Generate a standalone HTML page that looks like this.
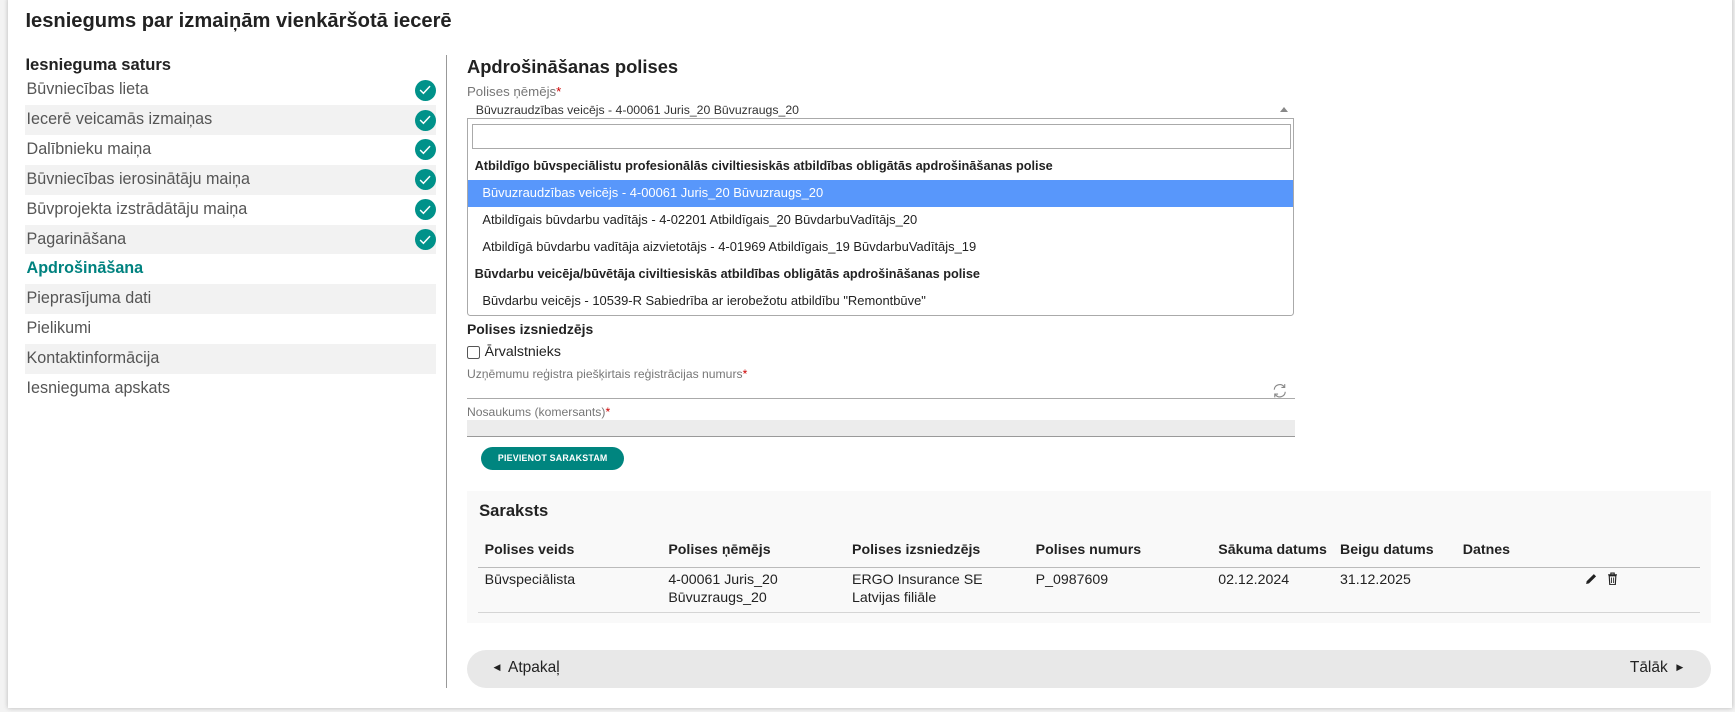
<!DOCTYPE html>
<html><head><meta charset="utf-8"><style>
html,body{margin:0;padding:0;background:#f3f3f3;width:1735px;height:712px;overflow:hidden}
#w{zoom:1.1065;width:1568px;height:644px;position:relative;font-family:"Liberation Sans",Arial,sans-serif;color:#222}
.card{position:absolute;left:7px;top:-2px;width:1558px;height:642px;background:#fff;box-shadow:0 0 4px rgba(0,0,0,.25)}
.a{position:absolute;white-space:nowrap}
h1{position:absolute;left:23px;top:9px;margin:0;font-size:18.2px;font-weight:bold}
.side{position:absolute;left:23px;top:68px;width:371px}
.side div{height:27px;line-height:27px;font-size:14.6px;color:#555;position:relative;padding-left:1px}
.side div.g{background:#f2f2f2}
.side div.act{color:#00827f;font-weight:bold}
.ck{position:absolute;right:0;top:4px;width:19px;height:19px;border-radius:50%;background:#00928a}
.ck svg{position:absolute;left:4px;top:5px}
.lbl{font-size:12px;color:#777}
.lbl b{color:#c00;font-weight:normal}
.opt{position:absolute;left:0;width:746px;height:24px;line-height:24px;font-size:11.7px;padding-left:13px;box-sizing:border-box}
.grp{position:absolute;left:0;width:746px;height:24px;line-height:24px;font-size:11.5px;font-weight:bold;padding-left:6px;box-sizing:border-box}
.col{position:absolute;font-size:12.8px}
</style></head><body><div id="w">
<div class="card"></div>
<h1>Iesniegums par izmaiņām vienkāršotā iecerē</h1>
<div class="a" style="left:23px;top:50px;font-size:15px;font-weight:bold">Iesnieguma saturs</div>
<div class="side">
<div>Būvniecības lieta<span class="ck"><svg width="11" height="9" viewBox="0 0 11 9"><path d="M1 4.5l3 3L10 1" stroke="#fff" stroke-width="1.3" fill="none"/></svg></span></div>
<div class="g">Iecerē veicamās izmaiņas<span class="ck"><svg width="11" height="9" viewBox="0 0 11 9"><path d="M1 4.5l3 3L10 1" stroke="#fff" stroke-width="1.3" fill="none"/></svg></span></div>
<div>Dalībnieku maiņa<span class="ck"><svg width="11" height="9" viewBox="0 0 11 9"><path d="M1 4.5l3 3L10 1" stroke="#fff" stroke-width="1.3" fill="none"/></svg></span></div>
<div class="g">Būvniecības ierosinātāju maiņa<span class="ck"><svg width="11" height="9" viewBox="0 0 11 9"><path d="M1 4.5l3 3L10 1" stroke="#fff" stroke-width="1.3" fill="none"/></svg></span></div>
<div>Būvprojekta izstrādātāju maiņa<span class="ck"><svg width="11" height="9" viewBox="0 0 11 9"><path d="M1 4.5l3 3L10 1" stroke="#fff" stroke-width="1.3" fill="none"/></svg></span></div>
<div class="g">Pagarināšana<span class="ck"><svg width="11" height="9" viewBox="0 0 11 9"><path d="M1 4.5l3 3L10 1" stroke="#fff" stroke-width="1.3" fill="none"/></svg></span></div>
<div class="act">Apdrošināšana</div>
<div class="g">Pieprasījuma dati</div>
<div>Pielikumi</div>
<div class="g">Kontaktinformācija</div>
<div>Iesnieguma apskats</div>
</div>
<div class="a" style="left:403px;top:50px;width:1px;height:572px;background:#999"></div>

<div class="a" style="left:422px;top:51px;font-size:16.6px;font-weight:bold">Apdrošināšanas polises</div>
<div class="a lbl" style="left:422px;top:76px">Polises ņēmējs<b>*</b></div>
<div class="a" style="left:430px;top:93px;font-size:11.1px;color:#333">Būvuzraudzības veicējs - 4-00061 Juris_20 Būvuzraugs_20</div>
<div class="a" style="left:1157px;top:97px;width:0;height:0;border-left:4px solid transparent;border-right:4px solid transparent;border-bottom:5px solid #888"></div>
<div class="a" style="left:422px;top:107px;width:746px;height:177px;border:1px solid #aaa;border-radius:0 0 3px 3px;background:#fff">
 <div class="a" style="left:4px;top:4px;width:738px;height:21px;border:1px solid #aaa"></div>
 <div class="grp" style="top:30px">Atbildīgo būvspeciālistu profesionālās civiltiesiskās atbildības obligātās apdrošināšanas polise</div>
 <div class="opt" style="top:55px;background:#5897fb;color:#fff">Būvuzraudzības veicējs - 4-00061 Juris_20 Būvuzraugs_20</div>
 <div class="opt" style="top:79px">Atbildīgais būvdarbu vadītājs - 4-02201 Atbildīgais_20 BūvdarbuVadītājs_20</div>
 <div class="opt" style="top:104px">Atbildīgā būvdarbu vadītāja aizvietotājs - 4-01969 Atbildīgais_19 BūvdarbuVadītājs_19</div>
 <div class="grp" style="top:128px">Būvdarbu veicēja/būvētāja civiltiesiskās atbildības obligātās apdrošināšanas polise</div>
 <div class="opt" style="top:152px">Būvdarbu veicējs - 10539-R Sabiedrība ar ierobežotu atbildību "Remontbūve"</div>
</div>
<div class="a" style="left:422px;top:290px;font-size:12.6px;font-weight:bold">Polises izsniedzējs</div>
<div class="a" style="left:422px;top:313px;width:10px;height:10px;border:1px solid #555;border-radius:2px"></div>
<div class="a" style="left:438px;top:311px;font-size:12.8px">Ārvalstnieks</div>
<div class="a lbl" style="left:422px;top:332px;font-size:11px">Uzņēmumu reģistra piešķirtais reģistrācijas numurs<b>*</b></div>
<div class="a" style="left:422px;top:360px;width:748px;height:1px;background:#aaa"></div>
<svg class="a" style="left:1150px;top:346px" width="14" height="14" viewBox="0 0 14 14"><path d="M2 6A5 5 0 0 1 11 3.5M12 8A5 5 0 0 1 3 10.5" stroke="#888" fill="none" stroke-width="1"/><path d="M11.5 1v3h-3M2.5 13v-3h3" stroke="#888" fill="none" stroke-width="1"/></svg>
<div class="a lbl" style="left:422px;top:366px;font-size:11px">Nosaukums (komersants)<b>*</b></div>
<div class="a" style="left:422px;top:380px;width:748px;height:14px;background:#ececec;border-bottom:1px solid #999"></div>
<div class="a" style="left:435px;top:404px;width:129px;height:21px;border-radius:11px;background:#00857f;color:#fff;font-size:8px;font-weight:bold;text-align:center;line-height:21px;letter-spacing:.2px">PIEVIENOT SARAKSTAM</div>

<div class="a" style="left:422px;top:444px;width:1124px;height:119px;background:#f9f9f9"></div>
<div class="a" style="left:433px;top:453px;font-size:15px;font-weight:bold">Saraksts</div>
<div class="col a" style="left:438px;top:490px;font-weight:bold">Polises veids</div>
<div class="col a" style="left:604px;top:490px;font-weight:bold">Polises ņēmējs</div>
<div class="col a" style="left:770px;top:490px;font-weight:bold">Polises izsniedzējs</div>
<div class="col a" style="left:936px;top:490px;font-weight:bold">Polises numurs</div>
<div class="col a" style="left:1101px;top:490px;font-weight:bold">Sākuma datums</div>
<div class="col a" style="left:1211px;top:490px;font-weight:bold">Beigu datums</div>
<div class="col a" style="left:1322px;top:490px;font-weight:bold">Datnes</div>
<div class="a" style="left:432px;top:512px;width:1104px;height:1px;background:#bbb"></div>
<div class="col a" style="left:438px;top:517px">Būvspeciālista</div>
<div class="col a" style="left:604px;top:517px;line-height:16px">4-00061 Juris_20<br>Būvuzraugs_20</div>
<div class="col a" style="left:770px;top:517px;line-height:16px">ERGO Insurance SE<br>Latvijas filiāle</div>
<div class="col a" style="left:936px;top:517px">P_0987609</div>
<div class="col a" style="left:1101px;top:517px">02.12.2024</div>
<div class="col a" style="left:1211px;top:517px">31.12.2025</div>
<svg class="a" style="left:1432px;top:518px" width="11" height="11" viewBox="0 0 11 11"><path d="M1 10l.6-2.6L8 1l2 2-6.4 6.4z" fill="#222"/></svg>
<svg class="a" style="left:1452px;top:517px" width="10" height="12" viewBox="0 0 10 12"><path d="M1 2.5h8M3.5 2.5V1h3v1.5M2 3.5h6l-.5 8h-5z" stroke="#222" fill="none" stroke-width="1"/><path d="M4 5v5M6 5v5" stroke="#222" stroke-width=".8"/></svg>
<div class="a" style="left:432px;top:553px;width:1104px;height:1px;background:#d5d5d5"></div>

<div class="a" style="left:422px;top:587px;width:1124px;height:35px;border-radius:18px;background:#e8e8e8"></div>
<div class="a" style="left:446px;top:596px;font-size:14px;color:#222"><span style="font-size:8px;position:relative;top:-2px">◀</span>&nbsp; Atpakaļ</div>
<div class="a" style="left:1473px;top:596px;font-size:14px;color:#222">Tālāk &nbsp;<span style="font-size:8px;position:relative;top:-2px">▶</span></div>
</div></body></html>
